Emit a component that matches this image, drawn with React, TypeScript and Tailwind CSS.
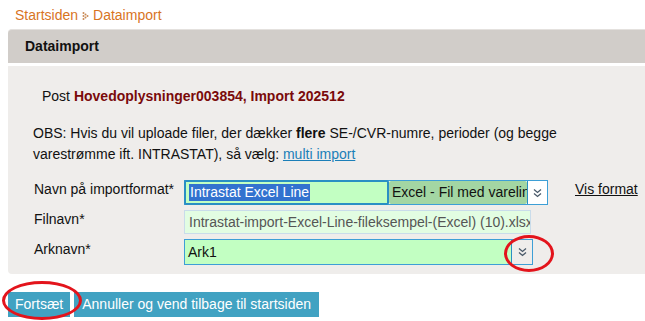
import React from "react";

function Chevrons() {
  return (
    <svg width="11" height="12" viewBox="0 0 11 12" fill="none" stroke="#4a5a6a" strokeWidth="1.3">
      <path d="M2 2.5 L5.5 5.5 L9 2.5" />
      <path d="M2 6.5 L5.5 9.5 L9 6.5" />
    </svg>
  );
}

export default function App() {
  return (
    <div className="relative w-[645px] h-[321px] bg-white overflow-hidden font-['Liberation_Sans',Arial,sans-serif] text-[14px] text-[#111]">
      {/* breadcrumb */}
      <div className="h-[29px] pl-[15px] pt-[7px] text-[#d8741f] flex items-start gap-[4px] leading-[16px]">
        <span>Startsiden</span>
        <svg width="7" height="16" viewBox="0 0 7 16">
          <g fill="#c98a55">
            <circle cx="1.5" cy="6" r="1" />
            <circle cx="1.5" cy="9" r="1" />
            <circle cx="1.5" cy="12" r="1" />
            <circle cx="3.5" cy="7.5" r="1" />
            <circle cx="3.5" cy="10.5" r="1" />
            <circle cx="5.5" cy="9" r="1" />
          </g>
        </svg>
        <span>Dataimport</span>
      </div>
      {/* header */}
      <div className="ml-[8px] h-[34px] bg-[#d1cdc9] rounded-tl-[4px] flex items-center pl-[17px] font-bold text-[14px] border-t border-[#e4e1de]">
        Dataimport
      </div>
      {/* panel */}
      <div className="ml-[8px] mt-[3px] h-[208px] bg-[#efedeb] rounded-bl-[4px] pt-[22px]">
        <div className="pl-[34px] leading-[16px]">
          Post <span className="font-bold text-[#7a0a0a]">Hovedoplysninger003854, Import 202512</span>
        </div>
        <div className="pl-[25px] mt-[19px] w-[590px] leading-[21px]">
          OBS: Hvis du vil uploade filer, der dækker <b>flere</b> SE-/CVR-numre, perioder (og begge varestrømme ift. INTRASTAT), så vælg:{" "}
          <a className="underline text-[#1b7fb8]">multi import</a>
        </div>
        <div className="mt-[14px] pl-[26px] flex flex-col">
          {/* row 1 */}
          <div className="flex items-center h-[27px]">
            <div className="w-[150px] -mt-[6px]">Navn på importformat*</div>
            <div className="w-[364px] h-[25px] border border-[#3d9fd6] bg-white flex items-stretch">
              <div className="w-[205px] -ml-[1px] -my-[1px] border-2 border-[#2a8fc4] rounded-[2px] bg-[#c2ffc2] flex items-center pl-[3px]">
                <span className="bg-[#3272cf] text-white leading-[17px] px-[1px]">Intrastat Excel Line</span>
              </div>
              <div className="w-[138px] bg-[#a3d6a3] rounded-[2px] flex items-center pl-[3px] whitespace-nowrap overflow-hidden">
                Excel - Fil med varelinjer
              </div>
              <div className="flex-1 bg-white border-l border-[#2a8fc4] flex items-center justify-center">
                <Chevrons />
              </div>
            </div>
            <a className="ml-[27px] -mt-[6px] underline text-[#111]">Vis format</a>
          </div>
          {/* row 2 */}
          <div className="flex items-center h-[24px] mt-[4px]">
            <div className="w-[150px] -mt-[6px]">Filnavn*</div>
            <div className="w-[347px] h-[24px] border border-[#c9dcea] bg-[#e2fde2] text-[#555] flex items-center pl-[4px] whitespace-nowrap overflow-hidden">
              Intrastat-import-Excel-Line-fileksempel-(Excel) (10).xlsx
            </div>
          </div>
          {/* row 3 */}
          <div className="flex items-center h-[26px] mt-[5px]">
            <div className="w-[150px] -mt-[6px]">Arknavn*</div>
            <div className="w-[349px] h-[26px] border border-[#3d9fd6] flex items-stretch">
              <div className="flex-1 bg-[#c2ffc2] flex items-center pl-[3px]">Ark1</div>
              <div className="w-[21px] bg-[#efedeb] border-l border-[#2a8fc4] flex items-center justify-center">
                <Chevrons />
              </div>
            </div>
          </div>
        </div>
      </div>
      {/* buttons */}
      <div className="ml-[8px] mt-[18px] flex gap-[4px]">
        <button className="h-[25px] px-[7px] bg-[#41a2c2] text-white text-[14px]">Fortsæt</button>
        <button className="h-[25px] px-[8px] bg-[#41a2c2] text-white text-[14px]">Annuller og vend tilbage til startsiden</button>
      </div>
      {/* red ellipses (annotations) */}
      <div className="absolute left-[504px] top-[235px] w-[50px] h-[37px] rounded-[50%] border-[3px] border-[#e3141c]" />
      <div className="absolute left-[2px] top-[281px] w-[80px] h-[39px] rounded-[50%] border-[3px] border-[#e3141c]" />
    </div>
  );
}
